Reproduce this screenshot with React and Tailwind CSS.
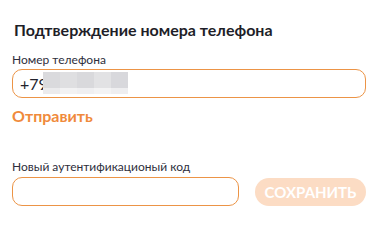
import React from "react";

export default function App() {
  const blocks = ["#dadadd", "#dfdfe1", "#d9d9dc", "#e2e2e4", "#d8d8dc"];
  const lows = ["#ebebed", "#f2f2f3", "#efeff1", "#f3f3f4", "#eeeef0"];
  return (
    <div className="w-[386px] h-[240px] bg-white px-3 pt-5" style={{ fontFamily: "Lato, 'Noto Sans', sans-serif" }}>
      <h1 className="text-[16px] leading-[20px] font-bold text-[#1e1e28] pl-[2px]">
        Подтверждение номера телефона
      </h1>
      <div className="mt-3 text-[12px] leading-[16px] text-[#2e2e3c]">Номер телефона</div>
      <div className="relative mt-px h-[29px] w-[354px] rounded-[10px] border border-[#ec9446] flex items-center pl-[7px] text-[16px] text-[#22222c]">
        <span>+79</span>
        <div className="absolute left-[30px] top-[2px] flex h-[22px]">
          {blocks.map((c, i) => (
            <div key={i} className="flex h-full w-[17px] flex-col">
              <div className="h-[16px]" style={{ background: c }} />
              <div className="h-[6px]" style={{ background: lows[i] }} />
            </div>
          ))}
        </div>
      </div>
      <div className="mt-2 text-[16px] leading-[20px] font-bold text-[#f08a3c]">Отправить</div>
      <div className="mt-[33px] text-[12px] leading-[16px] text-[#2e2e3c]">Новый аутентификационый код</div>
      <div className="mt-[2px] flex items-start gap-4">
        <div className="h-[29px] w-[227px] rounded-[10px] border border-[#ec9446]" />
        <button className="mt-px h-[28px] w-[111px] rounded-full bg-[#fcdcc4] text-[15px] font-bold text-white leading-none">
          СОХРАНИТЬ
        </button>
      </div>
    </div>
  );
}
